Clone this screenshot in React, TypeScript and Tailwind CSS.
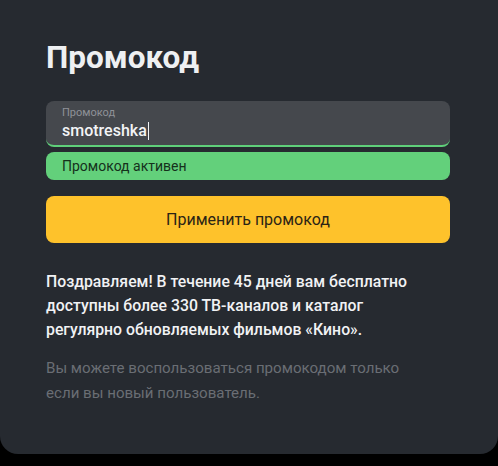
const font = { fontFamily: "Roboto, 'Noto Sans', sans-serif" };

export default function App() {
  return (
    <div className="min-h-[466px] bg-black" style={font}>
      <div className="rounded-b-[18px] bg-[#262a30] pt-[38px] pr-[48px] pb-[48px] pl-[46px]">
        <h1 className="text-[31.5px] font-bold leading-[40px] text-[#eef0f2]">
          Промокод
        </h1>

        <div className="mt-[23px] rounded-lg border-b-2 border-[#5fcf7a] bg-[#45484d] px-4 pt-[5px] pb-[4px]">
          <div className="text-[11px] leading-[14px] text-[#8f9298]">Промокод</div>
          <div className="flex items-center text-[16px] font-medium leading-[21px] text-[#f3f4f6]">
            smotreshka
            <span className="ml-px inline-block h-[18px] w-px bg-[#f3f4f6]" />
          </div>
        </div>

        <div className="mt-[5px] rounded-lg bg-[#63d07b] px-4 text-[14px] leading-[28px] text-[#15301b]">
          Промокод активен
        </div>

        <button className="mt-[16px] flex h-[47px] w-full items-center justify-center rounded-lg bg-[#fec22b] text-[16px] text-[#2b2415]">
          Применить промокод
        </button>

        <p className="mt-[27px] max-w-[380px] text-[15.8px] font-medium leading-[24px] text-[#f1f2f4]">
          Поздравляем! В течение 45 дней вам бесплатно доступны более 330
          ТВ-каналов и каталог регулярно обновляемых фильмов «Кино».
        </p>

        <p className="mt-[14px] max-w-[380px] text-[15.1px] leading-[25px] text-[#6a6e74]">
          Вы можете воспользоваться промокодом только если вы новый
          пользователь.
        </p>
      </div>
    </div>
  );
}
